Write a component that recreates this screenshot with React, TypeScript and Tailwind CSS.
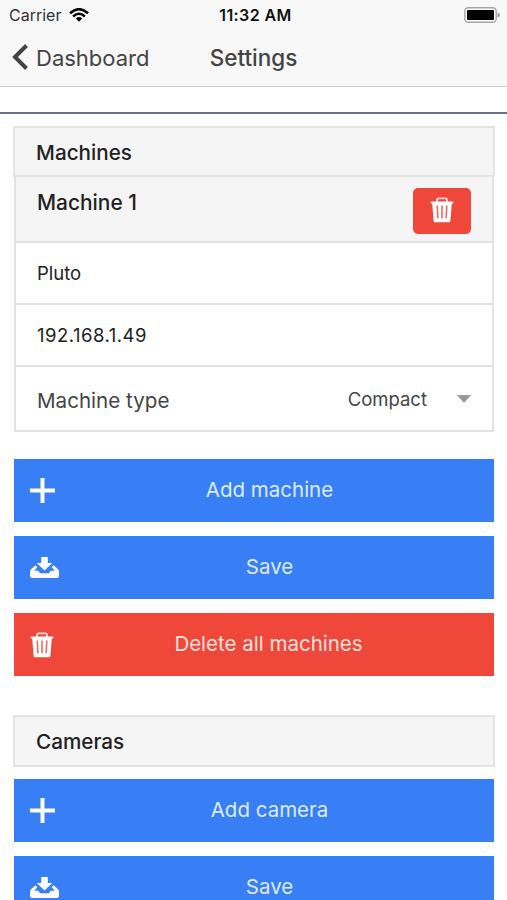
import React from 'react';

type IconName = 'plus' | 'save' | 'trash';

interface Action {
  label: string;
  icon: IconName;
  danger?: boolean;
}

const TrashIcon: React.FC = () => (
  <svg width="24" height="26" viewBox="0 0 24 26" fill="none">
    <path d="M7 5V3.200Q7 1.300 8.700 1.300H15.300Q17 1.300 17 3.200V5" stroke="#fde3e0" strokeWidth="1.700" />
    <path d="M.7 4.600H23.300V6.600H21.800L20.400 24Q20.300 25.300 19 25.300H5Q3.700 25.300 3.600 24L2.200 6.600H.7Z" fill="white" />
    <path d="M7.200 8.500L7.900 21.300M12 8.500V21.300M16.800 8.500L16.100 21.300" stroke="#ef6a60" strokeWidth="1.600" />
  </svg>
);

const ActionIcon: React.FC<{ name: IconName }> = ({ name }) => {
  if (name === 'trash') {
    return <TrashIcon />;
  }
  if (name === 'plus') {
    return (
      <svg width="25" height="25" viewBox="0 0 25 25" fill="white">
        <path d="M10.500 0H14.500V10.500H25V14.500H14.500V25H10.500V14.500H0V10.500H10.500Z" />
      </svg>
    );
  }
  return (
    <svg width="29" height="22" viewBox="0 0 29 22" fill="white">
      <path d="M11.200 0H17.800V6H22.300L14.500 13.500L6.700 6H11.200Z" />
      <path d="M5.500 8.200L7.300 10L4.300 13.700H8.300L10 16.300H19L20.700 13.700H24.700L21.700 10L23.500 8.200L28 12.200Q29 13.200 29 14.700V19Q29 21 27 21H2Q0 21 0 19V14.700Q0 13.200 1 12.200Z" />
    </svg>
  );
};

const ActionButton: React.FC<{ action: Action }> = ({ action }) => (
  <button
    className={`grid h-[63px] w-full shrink-0 grid-cols-[31px_1fr] items-center px-4 ${
      action.danger ? 'bg-[#ef473a] text-[#fde0dc]' : 'bg-[#387ef5] text-[#dcecff]'
    }`}
  >
    <span className="flex">
      <ActionIcon name={action.icon} />
    </span>
    <span className={`text-center text-[20.500px] ${action.danger ? 'pr-[2px]' : ''}`}>{action.label}</span>
  </button>
);

const App: React.FC = () => {
  const machineActions: Action[] = [
    { label: 'Add machine', icon: 'plus' },
    { label: 'Save', icon: 'save' },
    { label: 'Delete all machines', icon: 'trash', danger: true },
  ];
  const cameraActions: Action[] = [
    { label: 'Add camera', icon: 'plus' },
    { label: 'Save', icon: 'save' },
  ];

  return (
    <div className="flex h-[900px] w-[507px] flex-col overflow-hidden bg-white font-['Inter',sans-serif] text-[#222]">
      <header className="flex h-[87px] shrink-0 flex-col border-b border-[#cfcfcf] bg-[#f8f8f8]">
        <div className="grid h-[30px] grid-cols-3 items-center pr-[7px] pl-[9px] text-[#111]">
          <div className="flex items-center gap-2">
            <span className="text-[16px] leading-5 text-[#333]">Carrier</span>
            <svg width="20" height="14" viewBox="0 0 20 14" fill="none" stroke="black">
              <path d="M1 5.200Q10-2.800 19 5.200" strokeWidth="2.600" />
              <path d="M4.100 8.500Q10 3.200 15.900 8.500" strokeWidth="2.400" />
              <path d="M6.800 10.400Q10 7.700 13.200 10.400L10 13.800Z" fill="black" stroke="none" />
            </svg>
          </div>
          <span className="pl-[2px] text-center text-[16px] leading-5 font-semibold tracking-[0.4px] whitespace-nowrap">
            11:32 AM
          </span>
          <svg className="justify-self-end" width="36" height="16" viewBox="0 0 36 16">
            <rect x=".8" y=".8" width="31.400" height="14.400" rx="3.500" fill="#f8f8f8" stroke="#a5a5a5" strokeWidth="1.400" />
            <rect x="3" y="3" width="27" height="10" rx="1" fill="black" />
            <path d="M33.500 5.500Q36 6.500 36 8T33.500 10.500Z" fill="#999" />
          </svg>
        </div>
        <div className="grid h-[54px] grid-cols-[1fr_auto_1fr] items-center px-3 text-[#444]">
          <button className="flex items-center gap-2">
            <svg width="16" height="26" viewBox="0 0 16 26" fill="none" stroke="#444" strokeWidth="4">
              <path d="M14.500 1.500L3 13L14.500 24.500" />
            </svg>
            <span className="pt-px text-[22px] leading-7">Dashboard</span>
          </button>
          <h1 className="pt-[2px] text-[22.500px] leading-7 font-medium">Settings</h1>
        </div>
      </header>

      <main className="flex flex-col pt-[25px]">
        <div className="h-[2px] shrink-0 bg-[#66718f]" />

        <section className="flex flex-col pt-3 pr-3 pl-[13px]">
          <h2 className="flex h-[51px] items-center border-2 border-[#e4e4e4] bg-[#f5f5f5] pt-[2px] pl-[21px] text-[20.700px] font-medium">
            Machines
          </h2>
          <div className="mx-px flex flex-col rounded-b-[2px] border-2 border-t-0 border-[#e2e2e2]">
            <div className="flex h-[66px] items-start justify-between border-b-2 border-[#e2e2e2] bg-[#f5f5f5] pt-[11px] pr-[21px] pl-[21px]">
              <h3 className="pt-px text-[20.900px] leading-7 font-medium">Machine 1</h3>
              <button className="flex h-[46px] w-[58px] items-center justify-center rounded-[5px] bg-[#ef473a] pb-[2px]">
                <TrashIcon />
              </button>
            </div>
            <div className="flex h-[62px] items-center border-b-2 border-[#e2e2e2] pt-[2px] pl-[21px] text-[18.500px]">
              Pluto
            </div>
            <div className="flex h-[62px] items-center border-b-2 border-[#e2e2e2] pt-[2px] pl-[21px] text-[18.500px] tracking-[0.500px]">
              192.168.1.49
            </div>
            <div className="flex h-[63px] items-center justify-between pt-px pr-[21px] pl-[21px] text-[#444]">
              <span className="pt-[4px] text-[20.600px]">Machine type</span>
              <div className="flex items-center gap-[30px]">
                <span className="pt-[2px] text-[18.500px]">Compact</span>
                <svg width="14" height="8" viewBox="0 0 14 8" fill="#999">
                  <path d="M0 0H14L7 8Z" />
                </svg>
              </div>
            </div>
          </div>
        </section>

        <section className="flex flex-col gap-[14px] pt-[27px] pr-[13px] pl-[14px]">
          {machineActions.map((action) => (
            <ActionButton key={action.label} action={action} />
          ))}
        </section>

        <section className="flex flex-col pt-[39px] pr-3 pl-[13px]">
          <h2 className="flex h-[52px] items-center border-2 border-[#e4e4e4] bg-[#f5f5f5] pt-px pl-[21px] text-[20.700px] font-medium">
            Cameras
          </h2>
        </section>

        <section className="flex flex-col gap-[14px] pt-3 pr-[13px] pl-[14px]">
          {cameraActions.map((action) => (
            <ActionButton key={action.label} action={action} />
          ))}
        </section>
      </main>
    </div>
  );
};

export default App;
